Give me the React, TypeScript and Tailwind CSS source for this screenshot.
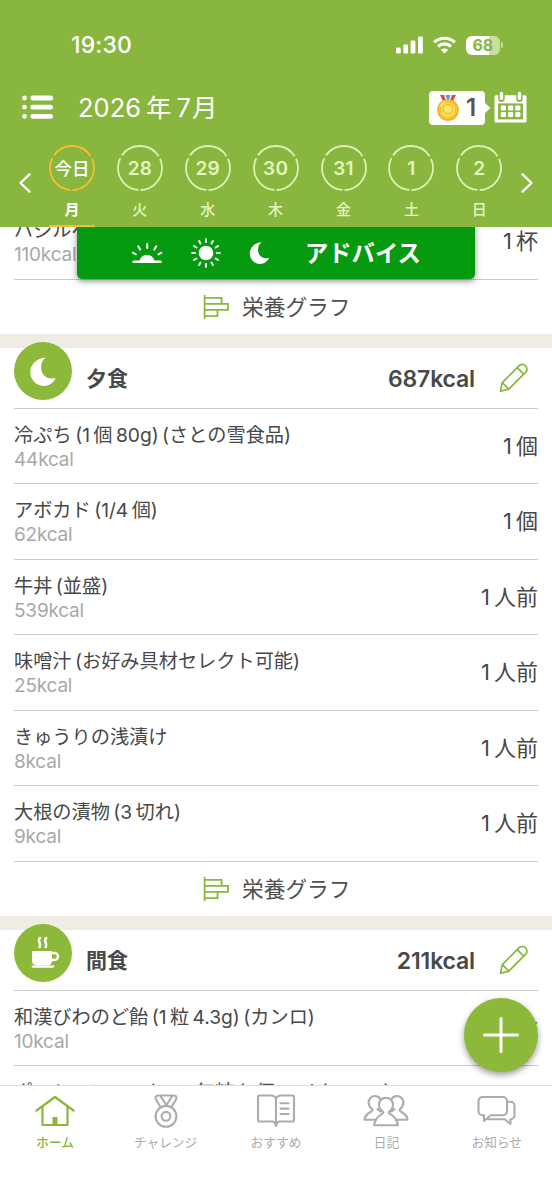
import React from "react";

const FONT = "font-['Inter','Noto_Sans_CJK_JP',sans-serif]";

/** Lays out runs of Japanese and Latin text with a small gap between scripts. */
function Mixed({ runs, gap = "gap-[3.400px]" }: { runs: string[]; gap?: string }) {
  return (
    <span className={`inline-flex whitespace-nowrap ${gap}`}>
      {runs.map((r, i) => (
        <span key={i}>{r}</span>
      ))}
    </span>
  );
}

function Moon({ className }: { className: string }) {
  return (
    <svg className={className} viewBox="0 0 26 29" fill="#fff">
      <path d="M15.600 .4A13.300 13.300 0 0 0 11.200 12c.8 6.800 6.500 10.900 14.500 8.900C23.600 25.800 19 28.900 13.700 28.900 6.200 28.900.2 22.700.2 15.100.2 7.600 6.600.9 15.600.4Z" />
    </svg>
  );
}

function Cup() {
  return (
    <svg className="-mt-[3px] ml-[3px] h-[32px] w-[30px]" viewBox="0 0 30 32" fill="#fff">
      <path d="M2 15h20v9.500c0 3-2 5-5 5H7c-3 0-5-2-5-5Z" />
      <path d="M21.500 17h3a3 3 0 0 1 0 7h-3" fill="none" stroke="#fff" strokeWidth="2.400" />
      <path d="M1.500 29.500h23c0 1.500-1 2.300-2.500 2.300H4c-1.500 0-2.500-.8-2.500-2.300Z" />
      <path d="M10 2c-3.500 3.500 2 5.500-.4 9M16.200 2c-3.500 3.500 2 5.500-.4 9" fill="none" stroke="#fff" strokeWidth="2.500" strokeLinecap="round" />
    </svg>
  );
}

function Pencil() {
  return (
    <svg className="h-[30px] w-[30px]" viewBox="0 0 30 30" fill="none" stroke="#82b83a" strokeWidth="1.700" strokeLinejoin="round">
      <path d="M1.500 28.200 3.300 19.600 20.200 2.700a4.300 4.300 0 0 1 6.100 0l.4.400a4.300 4.300 0 0 1 0 6.100L9.800 26.100Z" />
      <path d="M3.300 19.600 9.800 26.100M18.200 4.700l6.500 6.500" />
    </svg>
  );
}

function GraphIcon() {
  return (
    <svg className="h-[26px] w-[27px]" viewBox="0 0 27 26" fill="none" stroke="#8ab83a" strokeWidth="1.800">
      <path d="M1.600 1v24M1.600 3.900h17v6M1.600 9.900h23.400v6H1.600M14.500 15.900v6.200H1.600" />
    </svg>
  );
}

function GraphLink() {
  return (
    <div className="flex h-[54.500px] items-center gap-[12px] pl-[203px] text-[#505050]">
      <GraphIcon />
      <span className="text-[21.700px] leading-[28px]">栄養グラフ</span>
    </div>
  );
}

function Food({ name, kcal, qty }: { name: string[]; kcal: string; qty: string[] }) {
  return (
    <div className="mx-[14px] flex h-[75.500px] items-center justify-between border-b border-[#cbcbcb]">
      <div className="pt-[2px]">
        <div className="text-[19.200px] leading-[25px] text-[#484848]"><Mixed runs={name} /></div>
        <div className="text-[19px] leading-[23px] tracking-[-0.200px] text-[#a8a8a8]">{kcal}</div>
      </div>
      <div className="text-[22px] leading-[28px] text-[#484848]"><Mixed runs={qty} gap="gap-[4px]" /></div>
    </div>
  );
}

function MealHeader({ title, total, icon }: { title: string; total: string; icon: React.ReactNode }) {
  return (
    <>
      <div className="h-[13.500px] bg-[#eeece3]" />
      <div className="mx-[14px] flex h-[61px] items-start border-b border-[#cbcbcb] text-[#484848]">
        <div className="-mt-[5.500px] flex h-[58px] w-[58px] items-center justify-center rounded-full bg-[#8cb93a]">{icon}</div>
        <div className="ml-[14px] mt-[17.500px] flex-1 text-[21px] font-bold leading-[28px]">{title}</div>
        <div className="mt-[17px] text-[23px] font-semibold leading-[28px] tracking-[-0.150px]">{total}</div>
        <div className="ml-[24px] mr-[9px] mt-[15px]"><Pencil /></div>
      </div>
    </>
  );
}

const days = [
  ["今日", "月"],
  ["28", "火"],
  ["29", "水"],
  ["30", "木"],
  ["31", "金"],
  ["1", "土"],
  ["2", "日"],
];

const dinner = [
  { name: ["冷ぷち", "(1", "個", "80g)", "(さとの雪食品)"], kcal: "44kcal", qty: ["1", "個"] },
  { name: ["アボカド", "(1/4", "個)"], kcal: "62kcal", qty: ["1", "個"] },
  { name: ["牛丼", "(並盛)"], kcal: "539kcal", qty: ["1", "人前"] },
  { name: ["味噌汁", "(お好み具材セレクト可能)"], kcal: "25kcal", qty: ["1", "人前"] },
  { name: ["きゅうりの浅漬け"], kcal: "8kcal", qty: ["1", "人前"] },
  { name: ["大根の漬物", "(3", "切れ)"], kcal: "9kcal", qty: ["1", "人前"] },
];

function StatusBar() {
  return (
    <div className="flex h-[82px] items-center pl-[71px] pr-[49px] pt-[8px] text-white">
      <span className="flex-1 text-[23px] font-medium leading-[28px] tracking-[0.150px]">19:30</span>
      <svg className="mr-[10px] h-[18px] w-[27px]" viewBox="0 0 27 18" fill="#fff">
        <rect x="0" y="11.500" width="4.800" height="6" rx="1.300" />
        <rect x="7.300" y="8.500" width="4.800" height="9" rx="1.300" />
        <rect x="14.600" y="4.600" width="4.800" height="12.900" rx="1.300" />
        <rect x="22" y=".6" width="4.800" height="16.900" rx="1.300" />
      </svg>
      <svg className="mr-[10px] h-[18px] w-[23px]" viewBox="0 0 23 18" fill="none" stroke="#fff" strokeWidth="3.200">
        <path d="M1.200 6.400a14.800 14.800 0 0 1 20.600 0M5.100 10.500a9.200 9.200 0 0 1 12.800 0" />
        <path d="M11.500 17.600 7.800 13.900a5.400 5.400 0 0 1 7.400 0Z" fill="#fff" stroke="none" />
      </svg>
      <div className="flex h-[19px] w-[34.500px] items-center justify-center rounded-[6px] bg-[linear-gradient(90deg,#fff_68%,#c9df9f_68%)] text-[16px] font-bold leading-[19px] tracking-[-0.200px] text-[#89b63f]">68</div>
      <div className="ml-[1px] h-[6px] w-[2px] rounded-r-full bg-[#c9df9f]" />
    </div>
  );
}

function Medal() {
  return (
    <svg className="h-[28px] w-[24px]" viewBox="0 0 24 28">
      <path d="M4 1h4l3 7-3 1Z" fill="#d5454b" />
      <path d="M20 1h-4l-3 7 3 1Z" fill="#d5454b" />
      <path d="M8 1h8l-2 6h-4Z" fill="#5b95cd" />
      <path d="M8 1h1.600l2 6H10ZM16 1h-1.600l-2 6H14Z" fill="#e9edf5" />
      <circle cx="12" cy="16" r="10.800" fill="#f0b323" />
      <circle cx="12" cy="16" r="9" fill="#fbd850" />
      <circle cx="12" cy="16" r="7.900" fill="#ffdc4e" stroke="#edb12c" strokeWidth=".8" />
      <circle cx="12" cy="15" r="4.600" fill="#ffe571" stroke="#efb936" strokeWidth="1.100" />
      <path d="M4.500 12a8.500 8.500 0 0 1 5-4.600" fill="none" stroke="#fff3a8" strokeWidth="1.500" />
    </svg>
  );
}

function CalendarIcon() {
  return (
    <svg className="h-[32px] w-[33px]" viewBox="0 0 33 32">
      <path d="M2 4.200h29a1.500 1.500 0 0 1 1.500 1.500V30a1.500 1.500 0 0 1-1.500 1.500H2A1.500 1.500 0 0 1 .5 30V5.700A1.500 1.500 0 0 1 2 4.200Z" fill="#fff" />
      <rect x="4" y="12.400" width="25" height="16" fill="#89b63f" />
      <path d="M7.500 2.700v5M25.500 2.700v5" stroke="#89b63f" strokeWidth="6.400" strokeLinecap="round" />
      <path d="M7.500 2.400v5M25.500 2.400v5" stroke="#fff" strokeWidth="3.400" strokeLinecap="round" />
      <g fill="#fff">
        <rect x="6.800" y="14.600" width="5.200" height="5" rx="1" />
        <rect x="14" y="14.600" width="5.200" height="5" rx="1" />
        <rect x="21.200" y="14.600" width="5.200" height="5" rx="1" />
        <rect x="6.800" y="21" width="5.200" height="5" rx="1" />
        <rect x="14" y="21" width="5.200" height="5" rx="1" />
        <rect x="21.200" y="21" width="5.200" height="5" rx="1" />
      </g>
    </svg>
  );
}

function TitleBar() {
  return (
    <div className="flex h-[52px] items-center pl-[22px] pr-[25px] text-white">
      <svg className="-mt-[2px] h-[24px] w-[31px]" viewBox="0 0 31 24" stroke="#fff" strokeWidth="4.800" strokeLinecap="round">
        <path d="M2.500 3h.01M2.500 12.200h.01M2.500 21.300h.01M10.700 3h18M10.700 12.200h18M10.700 21.300h18" />
      </svg>
      <div className="ml-[25px] flex flex-1 gap-[5px] whitespace-nowrap text-[25.500px] leading-[32px]">
        <span>2026</span><span>年</span><span>7</span><span className="-ml-[4px]">月</span>
      </div>
      <div className="flex h-[34px] w-[56px] items-center gap-[6px] rounded-[4px] bg-white pl-[7px] text-[24px] font-semibold leading-[34px] text-[#555]">
        <Medal />
        <span>1</span>
      </div>
      <svg className="mr-[3px] h-[10px] w-[6px]" viewBox="0 0 6 10" fill="#fff"><path d="M0 0 5.500 5 0 10Z" /></svg>
      <div className="-mt-[2px]"><CalendarIcon /></div>
    </div>
  );
}

function WeekStrip() {
  return (
    <div className="flex h-[93px] px-[17px] text-[#e3f6c0]">
      <svg className="mt-[38px] h-[22px] w-[21px]" viewBox="0 0 21 22" fill="none" stroke="#fff" strokeWidth="2.400" strokeLinecap="round" strokeLinejoin="round"><path d="M12.500 2.400 3.500 11l9 8.600" /></svg>
      {days.map(([d, w], i) => (
        <div key={w} className={`flex w-[67.900px] flex-col items-center ${i === 0 ? "text-white" : ""}`}>
          <div className="mt-[10px] grid h-[48px] w-[48px] place-items-center">
            <svg className="col-start-1 row-start-1 h-[48px] w-[48px]" viewBox="0 0 48 48" fill="none" stroke={i === 0 ? "#fbbd28" : "#dcf2b5"} strokeWidth="1.800">
              <circle cx="24" cy="24" r="22" strokeDasharray="43.080 3" strokeDashoffset="-1.500" transform="rotate(90 24 24)" />
            </svg>
            <span className={`col-start-1 row-start-1 leading-[24px] ${i === 0 ? "pt-[1px] text-[17.500px] font-medium" : "pt-[1px] text-[19px] font-semibold tracking-[0.200px]"}`}>{d}</span>
          </div>
          <span className={`mt-[7.500px] text-[15px] leading-[20px] ${i === 0 ? "font-bold" : "font-medium"}`}>{w}</span>
          {i === 0 && <span className="mt-auto h-[2px] w-[46px] bg-[#fbbd28]" />}
        </div>
      ))}
      <svg className="mt-[38px] h-[22px] w-[21px]" viewBox="0 0 21 22" fill="none" stroke="#fff" strokeWidth="2.400" strokeLinecap="round" strokeLinejoin="round"><path d="m9.500 2.400 9 8.600-9 8.600" /></svg>
    </div>
  );
}

function Advice() {
  return (
    <div className="absolute left-[77px] top-[227px] z-10 flex h-[52px] w-[398px] items-center rounded-b-[5px] bg-[#069a10] pl-[54px] text-white shadow-[0_2px_6px_rgba(0,0,0,0.45)] [clip-path:inset(0_-12px_-12px_-12px)]">
      <svg className="h-[22px] w-[32px]" viewBox="0 0 32 22" fill="none" stroke="#fff" strokeWidth="2" strokeLinecap="round">
        <path d="M2.500 19.700h27" strokeWidth="2.400" />
        <path d="M8.500 19a7.700 7.700 0 0 1 15 0Z" fill="#fff" stroke="none" />
        <path d="M16.200 2v4M7.200 4.300l1.900 3.300M25.200 4.300l-1.900 3.300M1.800 10.700l3 1.600M30.400 10.700l-3 1.600" />
      </svg>
      <svg className="ml-[27px] h-[32px] w-[32px]" viewBox="0 0 32 32" fill="#fff" stroke="#fff" strokeWidth="2" strokeLinecap="round">
        <circle cx="16" cy="16" r="6.300" />
        {[0, 30, 60, 90, 120, 150, 180, 210, 240, 270, 300, 330].map((a) => (
          <path key={a} d="M16 2.200v2.800" transform={`rotate(${a} 16 16)`} />
        ))}
      </svg>
      <Moon className="ml-[27px] h-[22px] w-[21px]" />
      <span className="ml-[35px] mt-[2px] text-[23.300px] font-bold leading-[30px]">アドバイス</span>
    </div>
  );
}

const tabs: { label: string; icon: React.ReactNode }[] = [
  {
    label: "ホーム",
    icon: (
      <>
        <path d="M2.500 17.500 21 4l18.500 13.500M8.500 14v18h25V14" strokeWidth="2.200" />
        <path d="M18.500 24h5v8h-5Z" fill="currentColor" stroke="none" />
      </>
    ),
  },
  {
    label: "チャレンジ",
    icon: (
      <>
        <circle cx="21" cy="23.300" r="10.400" />
        <circle cx="21" cy="23.300" r="4.400" />
        <path d="M15.500 14 11 6.500C9.800 4 10.800 2.500 13 2.500h16c2.200 0 3.200 1.500 2 4L26.500 14M15 2.500l7 10.300M27.500 2.500 21 12.800" />
      </>
    ),
  },
  {
    label: "おすすめ",
    icon: (
      <>
        <path d="M21 5.500C20 3.200 18.200 2.500 16 2.500H4.500a1.500 1.500 0 0 0-1.500 1.500v23c0 .9.600 1.500 1.500 1.500H17c2.200 0 3.500 1 4 4.500.5-3.500 1.800-4.500 4-4.500h12.500c.9 0 1.500-.6 1.500-1.500V4a1.500 1.500 0 0 0-1.500-1.500H26c-2.200 0-4 .7-5 3ZM21 5.500V31" />
        <path d="M25.500 10.300h8M25.500 15.600h8M25.500 21h8" strokeLinecap="round" />
      </>
    ),
  },
  {
    label: "日記",
    icon: (
      <>
        <path d="M15.500 6.200C14.300 4 12.300 3 10 3 6.300 3 3.600 5.900 3.600 9.500c0 3 1.500 5 3.400 6.600.8.700.6 1.400-.3 2C2.500 20.600-.2 22.500-.5 26.700H11M26.500 6.200C27.700 4 29.700 3 32 3c3.700 0 6.400 2.900 6.400 6.500 0 3-1.500 5-3.400 6.600-.8.700-.6 1.400.3 2 4.200 2.500 6.900 4.400 7.200 8.600H31" />
        <path d="M17.600 20.600c1-.6.900-1.400.1-2-2-1.500-3.700-4-3.700-7 0-4 3.100-6.900 7-6.900s7 2.900 7 6.900c0 3-1.700 5.500-3.700 7-.8.600-.9 1.400.1 2 4.700 2.600 8 5.300 8.400 11.600H9.200c.4-6.300 3.700-9 8.400-11.600ZM12.500 16.100l3.200 2.600M29.500 16.100l-3.200 2.600" />
      </>
    ),
  },
  {
    label: "お知らせ",
    icon: (
      <>
        <path d="M6.500 4h20.500a4 4 0 0 1 4 4v10.300a4 4 0 0 1-4 4H14.700L8 28v-5.700H6.500a4 4 0 0 1-4-4V8a4 4 0 0 1 4-4Z" />
        <path d="M31 8.800h3.500a4 4 0 0 1 4 4v9.500a4 4 0 0 1-4 4V31l-5.700-4.700H12" />
      </>
    ),
  },
];

function TabBar() {
  return (
    <nav className="grid h-[115px] shrink-0 grid-cols-5 border-t border-[#dcdcdc] bg-white">
      {tabs.map((t, i) => (
        <div key={t.label} className={`flex flex-col items-center pt-[7px] ${i === 0 ? "text-[#8ab83a]" : "text-[#acacac]"}`}>
          <svg className="h-[36px] w-[42px] overflow-visible" viewBox="0 0 42 36" fill="none" stroke="currentColor" strokeWidth="2.100" strokeLinejoin="round" strokeLinecap="round">
            {t.icon}
          </svg>
          <span className={`mt-[5px] text-[12.700px] leading-[18px] ${i === 0 ? "font-medium" : ""}`}>{t.label}</span>
        </div>
      ))}
    </nav>
  );
}

export default function App() {
  return (
    <div lang="ja" className={`relative flex h-[1200px] w-[552px] flex-col overflow-hidden bg-white ${FONT}`}>
      <header className="h-[227px] shrink-0 bg-[#89b63f]">
        <StatusBar />
        <TitleBar />
        <WeekStrip />
      </header>
      <Advice />
      <main className="min-h-0 flex-1 overflow-hidden">
        <div className="-mt-[23px]">
          <Food name={["バジルペースト"]} kcal="110kcal" qty={["1", "杯"]} />
          <GraphLink />
          <MealHeader title="夕食" total="687kcal" icon={<Moon className="h-[29px] w-[26px]" />} />
          {dinner.map((f) => (
            <Food key={f.name.join("")} {...f} />
          ))}
          <GraphLink />
          <MealHeader title="間食" total="211kcal" icon={<Cup />} />
          <Food name={["和漢びわのど飴", "(1", "粒", "4.3g)", "(カンロ)"]} kcal="10kcal" qty={["1", "粒"]} />
          <Food name={["ポーションコーヒー\u2004", "無糖", "(1", "個", "18g)", "(KALDI)"]} kcal="7kcal" qty={["1", "個"]} />
        </div>
      </main>
      <button aria-label="追加" className="absolute left-[464px] top-[998px] z-10 flex h-[74px] w-[74px] items-center justify-center rounded-full bg-[#8cb93a] shadow-[0_3px_6px_rgba(0,0,0,0.4)]">
        <svg className="h-[38px] w-[38px]" viewBox="0 0 38 38" stroke="#fff" strokeWidth="3" strokeLinecap="round"><path d="M19 2.500v33M2.500 19h33" /></svg>
      </button>
      <TabBar />
    </div>
  );
}
